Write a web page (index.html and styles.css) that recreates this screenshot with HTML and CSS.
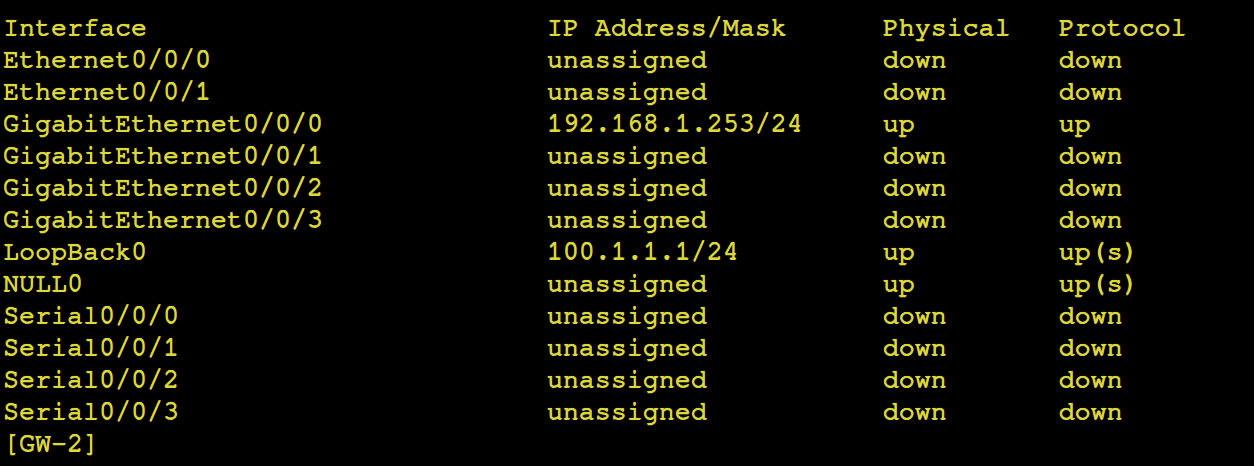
FILE: index.html
```html
<!DOCTYPE html>
<html>
<head>
<meta charset="utf-8">
<link rel="stylesheet" href="styles.css">
</head>
<body>
<pre class="term">Interface                         IP Address/Mask      Physical   Protocol
Ethernet0/0/0                     unassigned           down       down
Ethernet0/0/1                     unassigned           down       down
GigabitEthernet0/0/0              192.168.1.253/24     up         up
GigabitEthernet0/0/1              unassigned           down       down
GigabitEthernet0/0/2              unassigned           down       down
GigabitEthernet0/0/3              unassigned           down       down
LoopBack0                         100.1.1.1/24         up         up(s)
NULL0                             unassigned           up         up(s)
Serial0/0/0                       unassigned           down       down
Serial0/0/1                       unassigned           down       down
Serial0/0/2                       unassigned           down       down
Serial0/0/3                       unassigned           down       down
[GW-2]</pre>
</body>
</html>
```
FILE: styles.css
```css
html, body {
  margin: 0;
  padding: 0;
  background: #000;
  height: 100%;
}
.term {
  margin: 0;
  padding: 11px 0 0 3px;
  font-family: "Nimbus Mono PS", "Nimbus Mono L", "FreeMono", "Courier", "Liberation Mono", monospace;
  font-size: 26.667px;
  line-height: 32px;
  color: #dcd83a;
  text-shadow: 0.6px 0 0 #dcd83a, -0.3px 0 0 #dcd83a, 0 0.5px 0 #dcd83a, 0 0 1px #b8b430;
  white-space: pre;
}
```
